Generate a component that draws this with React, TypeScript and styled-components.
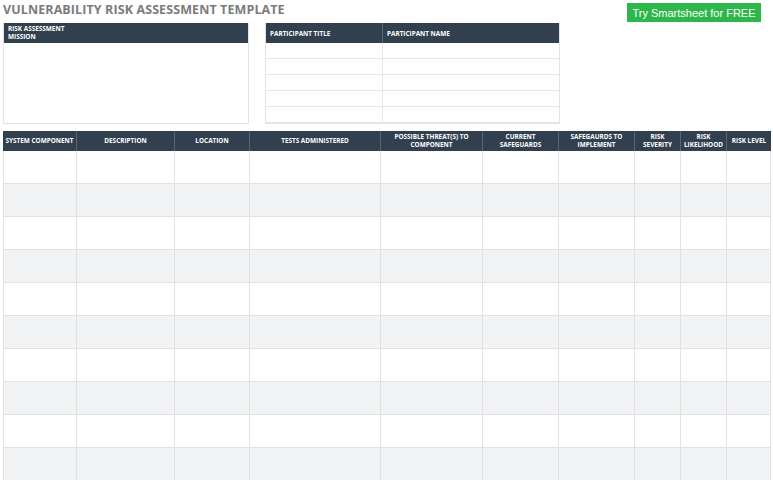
import React from "react";
import styled, { createGlobalStyle } from "styled-components";

const Global = createGlobalStyle`
  body { margin: 0; background: #fff; font-family: "Open Sans", "Liberation Sans", sans-serif; }
`;

const Page = styled.div`
  width: 773px; height: 480px; overflow: hidden; position: relative;
  padding: 0 2px 0 3px; box-sizing: border-box;
`;
const TopBar = styled.div`
  display: flex; justify-content: space-between; align-items: flex-start; height: 23px;
`;
const Title = styled.div`
  font-size: 12.5px; font-weight: 700; color: #7b7b7b; padding-top: 1px; letter-spacing: 0.1px;
`;
const TryButton = styled.div`
  margin-top: 3px; margin-right: 10px; width: 134px; height: 19px; background: #2db74b;
  color: #fff; font-family: "Liberation Sans", Arial, sans-serif; font-size: 11px;
  display: flex; align-items: center; justify-content: center;
`;
const TopRow = styled.div`
  display: flex; gap: 16px; height: 101px;
`;
const Box = styled.div<{ $w: number }>`
  width: ${p => p.$w}px; border: 1px solid #e3e3e3; border-top: none; box-sizing: border-box;
  display: flex; flex-direction: column;
`;
const Head = styled.div`
  background: #323f4f; color: #fff; font-size: 6.4px; font-weight: 700;
  line-height: 8px; padding: 2px 4px; height: 20px; box-sizing: border-box;
`;
const PGrid = styled.div`
  display: grid; grid-template-columns: 116px 1fr; grid-template-rows: 20px repeat(5, 16px);
  width: 295px; border: 1px solid #e3e3e3; border-top: none; box-sizing: border-box;
`;
const PHead = styled.div`
  background: #323f4f; color: #fff; font-size: 6.4px; font-weight: 700;
  display: flex; align-items: center; padding: 0 4px;
  & + & { border-left: 1px solid #5a6573; }
`;
const PCell = styled.div<{ $first: boolean }>`
  border-bottom: 1px solid #e6e6e6; ${p => (p.$first ? "" : "border-left: 1px solid #e6e6e6;")}
`;
const Main = styled.div`
  margin-top: 7px; display: grid;
  grid-template-columns: 73px 98px 75px 131px 102px 76px 76px 46px 46px 45px;
  grid-template-rows: 20px repeat(10, 33px);
`;
const MHead = styled.div<{ $first: boolean }>`
  background: #323f4f; color: #fff; font-size: 6.4px; font-weight: 700; line-height: 8px;
  display: flex; align-items: center; justify-content: center; text-align: center;
  ${p => (p.$first ? "" : "border-left: 1px solid #5a6573;")}
`;
const MCell = styled.div<{ $alt: boolean; $first: boolean }>`
  background: ${p => (p.$alt ? "#f2f3f5" : "#fff")};
  border-bottom: 1px solid #e2e2e2; border-left: 1px solid #e2e2e2;
  ${p => (p.$first ? "" : "")}
  &:nth-child(10n) { border-right: 1px solid #e2e2e2; }
`;

const cols = [
  "SYSTEM COMPONENT", "DESCRIPTION", "LOCATION", "TESTS ADMINISTERED",
  "POSSIBLE THREAT(S) TO\nCOMPONENT", "CURRENT\nSAFEGUARDS", "SAFEGAURDS TO\nIMPLEMENT",
  "RISK\nSEVERITY", "RISK\nLIKELIHOOD", "RISK LEVEL",
];

export default function App() {
  return (
    <Page>
      <Global />
      <TopBar>
        <Title>VULNERABILITY RISK ASSESSMENT TEMPLATE</Title>
        <TryButton>Try Smartsheet for FREE</TryButton>
      </TopBar>
      <TopRow>
        <Box $w={246}>
          <Head>RISK ASSESSMENT<br />MISSION</Head>
        </Box>
        <PGrid>
          <PHead>PARTICIPANT TITLE</PHead>
          <PHead>PARTICIPANT NAME</PHead>
          {Array.from({ length: 10 }).map((_, i) => (
            <PCell key={i} $first={i % 2 === 0} />
          ))}
        </PGrid>
      </TopRow>
      <Main>
        {cols.map((c, i) => (
          <MHead key={c} $first={i === 0}>
            {c.split("\n").map((l, j) => (
              <React.Fragment key={j}>{j > 0 && <br />}{l}</React.Fragment>
            ))}
          </MHead>
        ))}
        {Array.from({ length: 100 }).map((_, i) => (
          <MCell key={i} $alt={Math.floor(i / 10) % 2 === 1} $first={i % 10 === 0} />
        ))}
      </Main>
    </Page>
  );
}
